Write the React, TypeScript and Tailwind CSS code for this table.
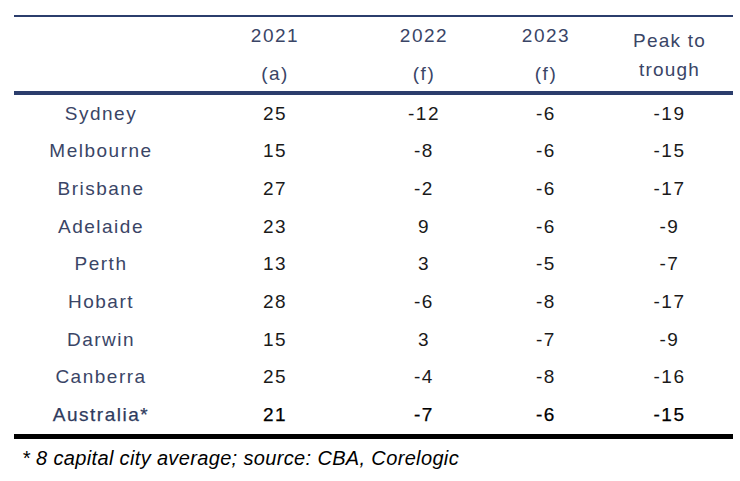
const rows: [string, string, string, string, string][] = [
  ["Sydney", "25", "-12", "-6", "-19"],
  ["Melbourne", "15", "-8", "-6", "-15"],
  ["Brisbane", "27", "-2", "-6", "-17"],
  ["Adelaide", "23", "9", "-6", "-9"],
  ["Perth", "13", "3", "-5", "-7"],
  ["Hobart", "28", "-6", "-8", "-17"],
  ["Darwin", "15", "3", "-7", "-9"],
  ["Canberra", "25", "-4", "-8", "-16"],
];

const cols = "grid grid-cols-[174px_174px_124px_120px_127px]";

function YearHead({ year, tag }: { year: string; tag: string }) {
  return (
    <div className="flex flex-col items-center pt-[9px] gap-[18px] leading-[20px]">
      <span>{year}</span>
      <span>{tag}</span>
    </div>
  );
}

export default function App() {
  return (
    <div
      className="w-[740px] h-[481px] bg-white pt-[15px] pl-[14px] text-[19px] tracking-[1.5px]"
      style={{ fontFamily: '"Liberation Sans", Arial, sans-serif' }}
    >
      <div className="w-[719px]">
        {/* Header */}
        <div className={`${cols} h-[80px] border-t-2 border-b-4 border-[#2b3d6c] text-[#3a4566]`}>
          <div />
          <YearHead year="2021" tag="(a)" />
          <YearHead year="2022" tag="(f)" />
          <YearHead year="2023" tag="(f)" />
          <div className="flex flex-col items-center pt-[9px] leading-[29px] tracking-[1.2px]">
            <span>Peak to</span>
            <span>trough</span>
          </div>
        </div>

        {/* Body */}
        {rows.map((r) => (
          <div key={r[0]} className={`${cols} h-[37.7px] items-center text-center`}>
            <span className="text-[#3a4566]">{r[0]}</span>
            {r.slice(1).map((v, i) => (
              <span key={i} className="text-[#1a1a1a]">
                {v}
              </span>
            ))}
          </div>
        ))}
        <div
          className={`${cols} h-[37.7px] items-center text-center [-webkit-text-stroke:0.25px]`}
        >
          <span className="text-[#2f3b5e]">Australia*</span>
          <span className="text-black">21</span>
          <span className="text-black">-7</span>
          <span className="text-black">-6</span>
          <span className="text-black">-15</span>
        </div>
        <div className="h-[5px] bg-black" />

        {/* Footnote */}
        <p className="mt-[8px] pl-[8px] text-[20px] leading-[22px] italic tracking-[0.35px] text-black">
          * 8 capital city average; source: CBA, Corelogic
        </p>
      </div>
    </div>
  );
}
